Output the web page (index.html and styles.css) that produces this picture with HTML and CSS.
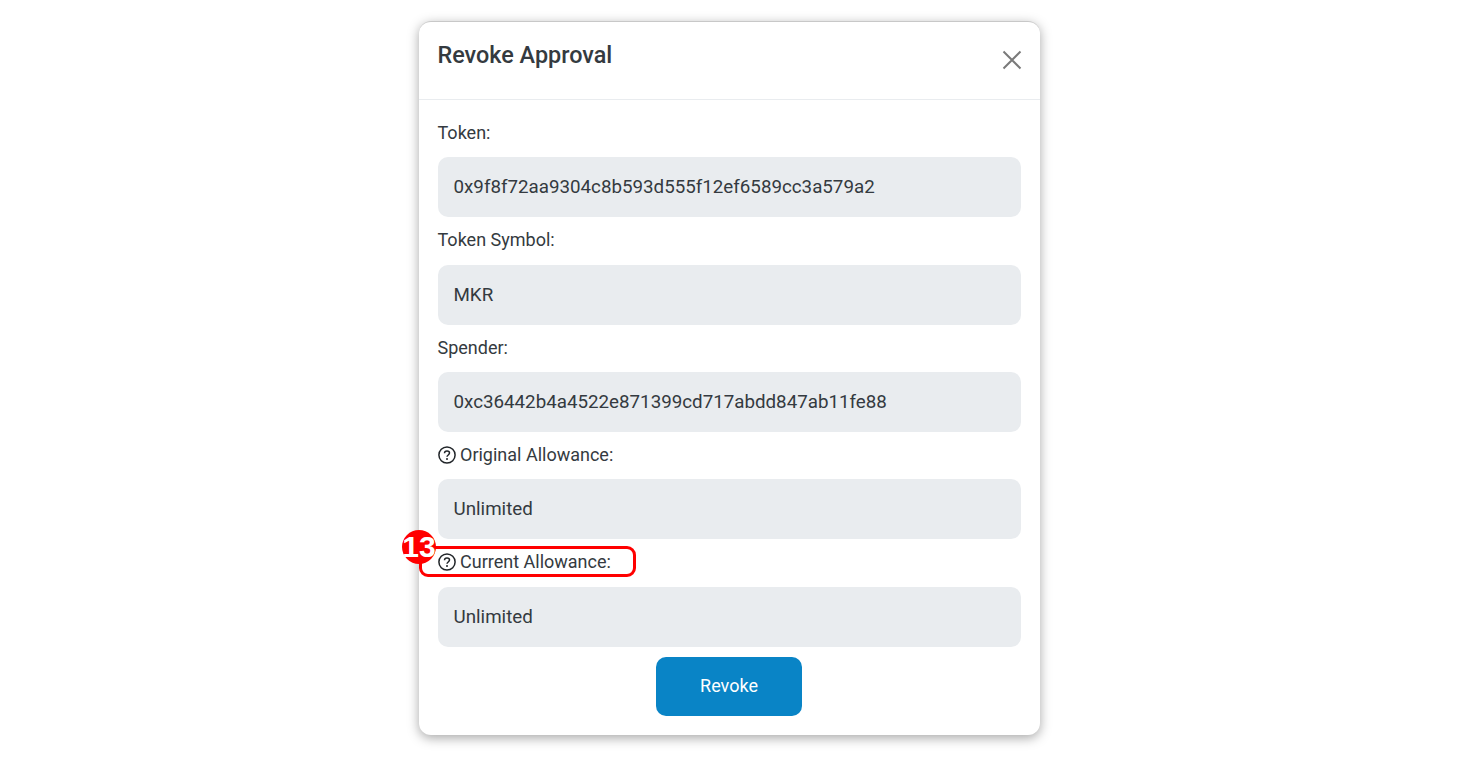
FILE: index.html
```html
<!DOCTYPE html>
<html lang="en">
<head>
    <meta charset="UTF-8">
    <meta name="viewport" content="width=device-width, initial-scale=1.0">
    <title>Revoke Approval</title>
    <link rel="stylesheet" href="styles.css">
</head>
<body>
    <div class="modal">
        <div class="modal-header">
            <h2 class="modal-title">Revoke Approval</h2>
            <button class="close-btn" aria-label="Close">
                <svg width="20" height="20" viewBox="0 0 20 20"><path d="M1.5 1.5 18.5 18.5M18.5 1.5 1.5 18.5" fill="none" stroke="#7a7a7a" stroke-width="2"/></svg>
            </button>
        </div>
        <div class="modal-body">
            <div class="field">
                <label class="field-label">Token:</label>
                <div class="field-value">0x9f8f72aa9304c8b593d555f12ef6589cc3a579a2</div>
            </div>
            <div class="field">
                <label class="field-label">Token Symbol:</label>
                <div class="field-value">MKR</div>
            </div>
            <div class="field">
                <label class="field-label">Spender:</label>
                <div class="field-value">0xc36442b4a4522e871399cd717abdd847ab11fe88</div>
            </div>
            <div class="field">
                <label class="field-label">
                    <svg class="help-icon" width="18" height="18" viewBox="0 0 18 18"><circle cx="9" cy="9" r="8.1" fill="none" stroke="#212529" stroke-width="1.5"/><path d="M6.5 7.2C6.5 5.8 7.6 5 9 5s2.5.8 2.5 2.1c0 1.9-2.5 1.9-2.5 3.7" fill="none" stroke="#212529" stroke-width="1.5"/><circle cx="9" cy="13" r="1" fill="#212529"/></svg>
                    Original Allowance:
                </label>
                <div class="field-value">Unlimited</div>
            </div>
            <div class="field">
                <label class="field-label">
                    <svg class="help-icon" width="18" height="18" viewBox="0 0 18 18"><circle cx="9" cy="9" r="8.1" fill="none" stroke="#212529" stroke-width="1.5"/><path d="M6.5 7.2C6.5 5.8 7.6 5 9 5s2.5.8 2.5 2.1c0 1.9-2.5 1.9-2.5 3.7" fill="none" stroke="#212529" stroke-width="1.5"/><circle cx="9" cy="13" r="1" fill="#212529"/></svg>
                    Current Allowance:
                    <span class="step-ring"></span>
                    <span class="step-badge">13</span>
                </label>
                <div class="field-value">Unlimited</div>
            </div>
            <div class="actions">
                <button class="revoke-btn">Revoke</button>
            </div>
        </div>
    </div>
</body>
</html>
```

FILE: styles.css
```css
* {
    margin: 0;
    padding: 0;
    box-sizing: border-box;
}

body {
    font-family: 'Roboto', sans-serif;
    background: #fff;
    color: #343a40;
    padding: 21px 1px 0 0;
    height: 757px;
    overflow: hidden;
}

.modal {
    width: 621px;
    height: 714px;
    margin: 0 auto;
    background: #fff;
    border-radius: 12px;
    border-top: 1px solid #c8c8c8;
    box-shadow: 0 3px 12px rgba(0, 0, 0, 0.35);
}

.modal-header {
    height: 78px;
    padding: 18px 19px 0;
    display: flex;
    justify-content: space-between;
    align-items: flex-start;
    border-bottom: 1px solid #e9ecef;
}

.modal-title {
    font-size: 23.4px;
    font-weight: 500;
    line-height: 30px;
    color: #343a40;
}

.close-btn {
    background: none;
    border: none;
    margin: 10px -1px 0 0;
    display: flex;
}

.modal-body {
    padding: 20.75px 19px 0;
}

.field {
    margin-bottom: 10.95px;
}

.field-label {
    position: relative;
    display: flex;
    align-items: center;
    gap: 4.5px;
    font-size: 18px;
    line-height: 24px;
    margin-bottom: 12.45px;
}

.field-value {
    height: 60px;
    padding: 0 16px;
    background: #e9ecef;
    border-radius: 10px;
    font-size: 18.75px;
    line-height: 60px;
}

.step-ring {
    position: absolute;
    left: -18.5px;
    top: -4px;
    width: 217px;
    height: 31px;
    border: 3px solid #f00;
    border-radius: 9px;
}

.step-badge {
    position: absolute;
    left: -35.5px;
    top: -20px;
    width: 34px;
    height: 34px;
    background: #f00;
    border-radius: 50%;
    color: #fff;
    font-family: 'Liberation Sans', sans-serif;
    font-size: 30px;
    font-weight: 700;
    line-height: 34px;
    white-space: nowrap;
    display: flex;
    justify-content: center;
}

.actions {
    display: flex;
    justify-content: center;
    margin-top: -1px;
}

.revoke-btn {
    width: 146px;
    height: 59px;
    padding-bottom: 2px;
    background: #0984c6;
    color: #fff;
    border: none;
    border-radius: 10px;
    font-family: inherit;
    font-size: 18px;
    font-weight: 400;
}
```
